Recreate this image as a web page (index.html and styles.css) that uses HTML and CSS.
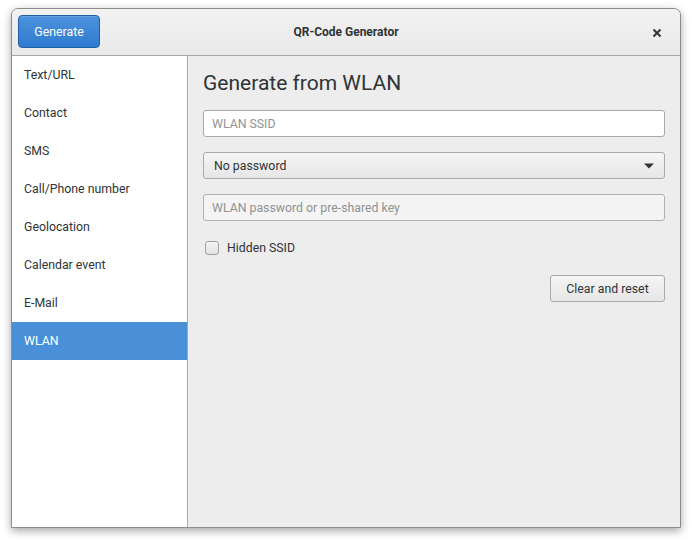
FILE: index.html
```html
<!DOCTYPE html>
<html>
<head>
<meta charset="utf-8">
<link rel="stylesheet" href="styles.css">
</head>
<body>
<div class="stage">
  <div class="window">
    <header class="headerbar">
      <button class="btn-suggested">Generate</button>
      <div class="title">QR-Code Generator</div>
      <button class="close" aria-label="Close">
        <svg width="10" height="10" viewBox="0 0 10 10"><path d="M1.5 1.5 L8.5 8.5 M8.5 1.5 L1.5 8.5" stroke="#2e3436" stroke-width="2" stroke-linecap="butt"/></svg>
      </button>
    </header>
    <div class="body">
      <nav class="sidebar">
        <div class="row">Text/URL</div>
        <div class="row">Contact</div>
        <div class="row">SMS</div>
        <div class="row">Call/Phone number</div>
        <div class="row">Geolocation</div>
        <div class="row">Calendar event</div>
        <div class="row">E-Mail</div>
        <div class="row selected">WLAN</div>
      </nav>
      <main class="content">
        <h1 class="heading">Generate from WLAN</h1>
        <div class="entry"><span class="placeholder">WLAN SSID</span></div>
        <div class="combo"><span>No password</span>
          <svg width="12" height="8" viewBox="0 0 12 8"><path d="M1 1.5 H11 L6 6.5 Z" fill="#2e3436"/></svg>
        </div>
        <div class="entry insensitive"><span class="placeholder">WLAN password or pre-shared key</span></div>
        <label class="check"><span class="box"></span><span>Hidden SSID</span></label>
        <div class="actions"><button class="btn">Clear and reset</button></div>
      </main>
    </div>
  </div>
</div>
</body>
</html>
```

FILE: styles.css
```css
* { box-sizing: border-box; }
html, body { margin: 0; padding: 0; background: #ffffff; }
body {
  font-family: Roboto, "Noto Sans", "Liberation Sans", sans-serif;
  font-size: 12.3px;
  color: #2e3436;
}
.stage {
  width: 692px;
  height: 542px;
  padding: 8px 11px 14px 11px;
}
.window {
  width: 670px;
  height: 520px;
  border: 1px solid #8c8c8c;
  border-radius: 7px 7px 0 0;
  box-shadow: 0 3px 9px rgba(0,0,0,0.35);
  display: flex;
  flex-direction: column;
  overflow: hidden;
  background: #ededed;
}
.headerbar {
  height: 47px;
  flex: none;
  display: flex;
  align-items: center;
  padding: 0 6px;
  background: linear-gradient(to bottom, #f2f2f2, #e9e9e9);
  border-bottom: 1px solid #a8a8a8;
  position: relative;
}
.btn-suggested {
  font: inherit;
  width: 82px;
  height: 33px;
  color: #ffffff;
  border: 1px solid #1f5fa6;
  border-radius: 4px;
  background: linear-gradient(to bottom, #4d92dc, #2f7bd0);
  box-shadow: inset 0 1px rgba(255,255,255,0.15);
  padding: 0;
  margin-top: -1px;
}
.title {
  position: absolute;
  left: 0; right: 0;
  text-align: center;
  font-weight: bold;
  font-size: 12px;
  pointer-events: none;
  top: 16px;
}
.close {
  margin-left: auto;
  width: 34px;
  height: 34px;
  background: none;
  border: none;
  display: flex;
  align-items: center;
  justify-content: center;
  padding: 0;
  margin-right: 0;
  margin-top: 1px;
}
.body {
  flex: 1;
  display: flex;
  min-height: 0;
}
.sidebar {
  width: 176px;
  flex: none;
  background: #ffffff;
  border-right: 1px solid #a8a8a8;
}
.row {
  height: 38px;
  padding: 0 12px;
  display: flex;
  align-items: center;
  color: #2e3436;
  padding-bottom: 1px;
}
.row.selected {
  background: #4a90d9;
  color: #ffffff;
}
.content {
  flex: 1;
  padding: 14px 15px 0 15px;
}
.heading {
  margin: 0 0 14px 0;
  font-size: 21px;
  font-weight: normal;
  line-height: 26px;
  color: #2e3436;
}
.entry {
  height: 27px;
  background: #ffffff;
  border: 1px solid #a9a9a9;
  border-radius: 3px;
  display: flex;
  align-items: center;
  padding: 0 8px;
  margin-bottom: 15px;
}
.entry.insensitive { background: #f4f4f4; border-color: #b0b0b0; }
.placeholder { color: #8f9393; }
.combo {
  height: 27px;
  border: 1px solid #a9a9a9;
  border-radius: 3px;
  background: linear-gradient(to bottom, #f5f5f5, #e6e6e6);
  display: flex;
  align-items: center;
  justify-content: space-between;
  padding: 0 9px 0 10px;
  margin-bottom: 15px;
}
.check {
  display: flex;
  align-items: center;
  gap: 8px;
  height: 20px;
  margin-top: 17px;
  padding-left: 2px;
}
.box {
  width: 14px;
  height: 14px;
  border: 1px solid #a0a0a0;
  border-radius: 3px;
  background: linear-gradient(to bottom, #f4f4f4, #e2e2e2);
}
.actions {
  display: flex;
  justify-content: flex-end;
  margin-top: 17px;
}
.btn {
  font: inherit;
  color: #2e3436;
  width: 115px;
  height: 27px;
  border: 1px solid #a9a9a9;
  border-radius: 3px;
  background: linear-gradient(to bottom, #f5f5f5, #e6e6e6);
  padding: 0;
}
```
